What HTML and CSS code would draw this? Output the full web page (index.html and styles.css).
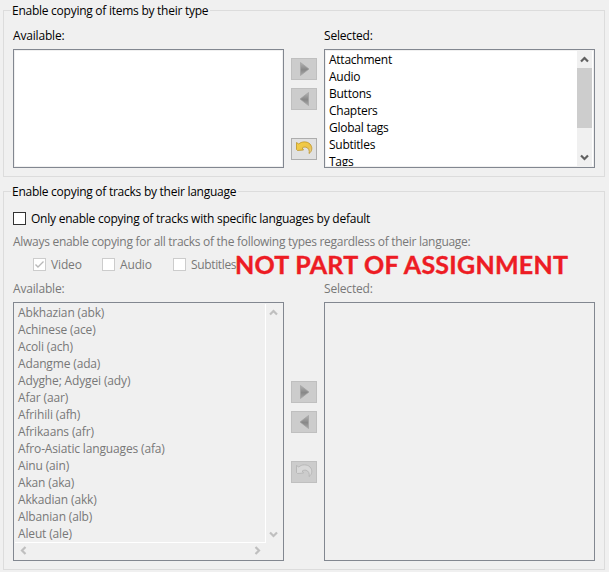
FILE: index.html
```html
<!DOCTYPE html>
<html lang="en">
<head>
<meta charset="utf-8">
<title>Track copying defaults</title>
<link rel="stylesheet" href="styles.css">
</head>
<body>
<svg width="0" height="0" class="defs">
  <defs>
    <linearGradient id="gray" x1="0" y1="0" x2="0" y2="1"><stop offset="0" stop-color="#b2b2b2"/><stop offset=".55" stop-color="#888"/><stop offset="1" stop-color="#a8a8a8"/></linearGradient>
    <linearGradient id="gold" x1="0" y1="0" x2="1" y2="1"><stop offset="0" stop-color="#f4cf42"/><stop offset=".65" stop-color="#ebc34b"/><stop offset="1" stop-color="#e5d3ae"/></linearGradient>
    <symbol id="right" viewBox="0 0 24 20"><path d="M8.500 3.500v13l8.500-6.500z" fill="url(#gray)" stroke="#a0a0a0" stroke-width=".7"/></symbol>
    <symbol id="left" viewBox="0 0 24 20"><path d="M16.500 3.500v13L8 10z" fill="url(#gray)" stroke="#a0a0a0" stroke-width=".7"/></symbol>
    <symbol id="undo" viewBox="0 0 24 20"><path d="M4.500 3.500L6.800 5C9.500 2.300 15 2 18 5C20.800 8 20.300 12.500 17 14.500C17.800 11.500 16.500 8.800 14 8.200C12.500 7.900 11 8.300 10.200 9L11.500 11L5.500 11.500L4.500 10.500z"/></symbol>
    <symbol id="up" viewBox="0 0 9 7"><path d="M1 5.500L4.500 2L8 5.500" fill="none" stroke="currentColor" stroke-width="2.200"/></symbol>
  </defs>
</svg>
<main class="panel">
  <section class="group types">
    <h2>Enable copying of items by their type</h2>
    <div class="picker">
      <div class="column">
        <div class="label">Available:</div>
        <div class="list"></div>
      </div>
      <div class="buttons">
        <button disabled><svg><use href="#right"/></svg></button>
        <button disabled><svg><use href="#left"/></svg></button>
        <button class="undo"><svg><use href="#undo"/></svg></button>
      </div>
      <div class="column">
        <div class="label">Selected:</div>
        <div class="list">
          <ul><li>Attachment</li><li>Audio</li><li>Buttons</li><li>Chapters</li><li>Global tags</li><li>Subtitles</li><li>Tags</li></ul>
          <div class="scrollbar"><svg class="arrow"><use href="#up"/></svg><i class="thumb"></i><svg class="arrow down"><use href="#up"/></svg></div>
        </div>
      </div>
    </div>
  </section>
  <section class="group languages">
    <h2>Enable copying of tracks by their language</h2>
    <div class="check main-check"><i class="box"></i><span>Only enable copying of tracks with specific languages by default</span></div>
    <p class="hint">Always enable copying for all tracks of the following types regardless of their language:</p>
    <div class="checks">
      <div class="check video"><i class="box"><svg viewBox="0 0 11 11"><path d="M1.500 5.500L4 8L9.500 2.500" fill="none" stroke="#b8b8b8" stroke-width="1.400"/></svg></i><span>Video</span></div>
      <div class="check audio"><i class="box"></i><span>Audio</span></div>
      <div class="check subtitles"><i class="box"></i><span>Subtitles</span></div>
      <strong class="notice">NOT PART OF ASSIGNMENT</strong>
    </div>
    <div class="picker">
      <div class="column">
        <div class="label">Available:</div>
        <div class="list scroll-both">
          <ul><li>Abkhazian (abk)</li><li>Achinese (ace)</li><li>Acoli (ach)</li><li>Adangme (ada)</li><li>Adyghe; Adygei (ady)</li><li>Afar (aar)</li><li>Afrihili (afh)</li><li>Afrikaans (afr)</li><li>Afro-Asiatic languages (afa)</li><li>Ainu (ain)</li><li>Akan (aka)</li><li>Akkadian (akk)</li><li>Albanian (alb)</li><li>Aleut (ale)</li></ul>
          <div class="scrollbar"><svg class="arrow"><use href="#up"/></svg><svg class="arrow down"><use href="#up"/></svg></div>
          <div class="hscroll"><svg class="arrow west"><use href="#up"/></svg><svg class="arrow east"><use href="#up"/></svg></div>
        </div>
      </div>
      <div class="buttons">
        <button disabled><svg><use href="#right"/></svg></button>
        <button disabled><svg><use href="#left"/></svg></button>
        <button class="undo" disabled><svg><use href="#undo"/></svg></button>
      </div>
      <div class="column">
        <div class="label">Selected:</div>
        <div class="list"></div>
      </div>
    </div>
  </section>
</main>
</body>
</html>
```
FILE: styles.css
```css
* { box-sizing: border-box; }
body { margin: 0; background: #fff; color: #000; font: 12px/17px "Open Sans", "Noto Sans", sans-serif; letter-spacing: -0.15px; overflow: hidden; }
.defs { position: absolute; }
.panel { width: 609px; height: 572px; padding: 10px 4px 0 3px; background: #f0f0f0; }
.group { border: 1px solid #dcdcdc; padding: 0 9px; }
.types { height: 167px; margin-bottom: 14px; }
.languages { height: 379px; }
h2 { width: max-content; height: 17px; margin: -9px 0 0 -2px; padding: 0 2px 0 1px; background: #f0f0f0; font-size: 12px; font-weight: 400; line-height: 17px; letter-spacing: -0.26px; white-space: nowrap; }
.picker { display: grid; grid-template-columns: 271px 26px 271px; column-gap: 7px; }
.label { height: 17px; letter-spacing: -0.18px; }
.list { display: grid; grid-template-columns: 1fr 16px; margin-top: 5px; background: #fff; border: 1px solid #828790; padding: 1px; outline: 1px solid #f0f0f0; outline-offset: -2px; overflow: hidden; }
.types .list { height: 119px; }
.types .picker { padding-top: 8px; }
ul { list-style: none; margin: 0; padding: 0 0 0 3px; overflow: hidden; }
li { height: 17px; white-space: nowrap; }
.types li { letter-spacing: -0.25px; }
.scrollbar { display: flex; flex-direction: column; align-items: center; justify-content: space-between; width: 15px; padding: 5px 0; background: #f0f0f0; color: #606060; }
.arrow { display: block; width: 9px; height: 7px; }
.down { transform: rotate(180deg); }
.thumb { width: 15px; height: 60px; margin-top: 5px; margin-bottom: auto; background: #cdcdcd; }
.buttons { display: flex; flex-direction: column; gap: 8px; padding-top: 31px; }
button { width: 26px; height: 22px; padding: 0; border: 1px solid #bfbfbf; background: #ccc; }
button svg { display: block; width: 24px; height: 20px; }
.undo { margin-top: 20px; background: #e1e1e1; border-color: #adadad; fill: url(#gold); stroke: #b98d19; stroke-width: .7; }
.undo:disabled { background: #ccc; border-color: #bfbfbf; fill: #d8d8d8; stroke: #adadad; }
.check { display: flex; align-items: center; gap: 5px; height: 17px; white-space: nowrap; }
.box { display: block; width: 13px; height: 13px; border: 1px solid #333; background: #fff; }
.box svg { display: block; width: 11px; height: 11px; }
.main-check { margin-top: 10px; letter-spacing: -0.24px; }
.hint { margin: 6px 0; height: 17px; color: #787878; letter-spacing: -0.285px; white-space: nowrap; }
.checks { position: relative; display: flex; height: 17px; padding-left: 20px; color: #787878; }
.checks .box { border-color: #ccc; }
.video { width: 69px; }
.audio { width: 71px; }
.subtitles { letter-spacing: -0.35px; }
.notice { position: absolute; left: 222px; top: -8px; color: #ed1c24; font: 700 25px/32px Lato, sans-serif; white-space: nowrap; letter-spacing: 0.26px; -webkit-text-stroke: 0.4px #ed1c24; }
.languages .picker { padding-top: 7px; color: #787878; }
.languages .list { height: 259px; background: #f0f0f0; }
.languages .scrollbar { color: #bfbfbf; }
.languages .buttons { padding-top: 101px; }
.languages .scroll-both { grid-template-columns: 251px 16px; grid-template-rows: 239px 16px; }
.scroll-both ul { border-right: 1px solid #fff; border-bottom: 1px solid #fff; }
.hscroll { display: flex; justify-content: space-between; align-items: center; padding: 0 4px 2px; color: #bfbfbf; }
.west { transform: rotate(-90deg); }
.east { transform: rotate(90deg); }
```
